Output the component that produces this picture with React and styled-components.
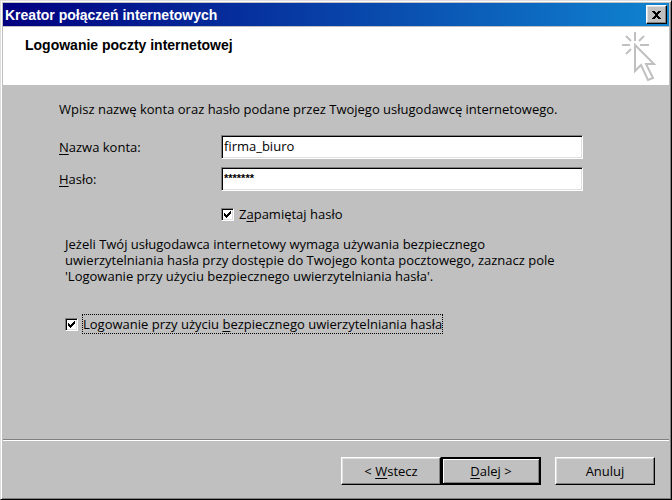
import React, { useState } from "react";
import styled, { createGlobalStyle, css } from "styled-components";

const GlobalStyle = createGlobalStyle`
    * {
        box-sizing: border-box;
    }
    body {
        margin: 0;
        background: #c0c0c0;
        color: #000;
        font-family: "Open Sans", "Liberation Sans", Arial, sans-serif;
        font-size: 13px;
        line-height: 16px;
    }
    button,
    input {
        font: inherit;
        color: inherit;
    }
    u {
        text-underline-offset: 2px;
    }
`;

const raised = css`
    border: 1px solid;
    border-color: #fff #000 #000 #fff;
    box-shadow: inset -1px -1px #808080, inset 1px 1px #dfdfdf;
`;

const sunken = css`
    border: 1px solid;
    border-color: #808080 #fff #fff #808080;
    box-shadow: inset 1px 1px #000, inset -1px -1px #dfdfdf;
`;

const Dialog = styled.div`
    display: flex;
    flex-direction: column;
    min-height: 100vh;
    padding: 2px;
    background: #c0c0c0;
    border: 1px solid;
    border-color: #dfdfdf #000 #000 #dfdfdf;
    box-shadow: inset 1px 1px #fff, inset -1px -1px #808080;
`;

const TitleBar = styled.header`
    display: flex;
    align-items: center;
    justify-content: space-between;
    height: 23px;
    padding: 0 2px;
    color: #fff;
    background: linear-gradient(to right, #000080, #1084d0);
`;

const Title = styled.h1`
    margin: 0;
    font-family: "Liberation Sans", Arial, sans-serif;
    font-size: 14px;
    font-weight: 700;
`;

const CloseButton = styled.button`
    ${raised}
    display: flex;
    align-items: center;
    justify-content: center;
    width: 21px;
    height: 19px;
    padding: 0;
    color: #000;
    background: #c0c0c0;
`;

const Banner = styled.div`
    display: flex;
    align-items: flex-start;
    justify-content: space-between;
    height: 58px;
    margin-top: 1px;
    padding: 4px 12px 0 22px;
    background: #fff;
`;

const Heading = styled.h2`
    margin: 6px 0 0;
    font-family: "Liberation Sans", Arial, sans-serif;
    font-size: 14px;
    font-weight: 700;
`;

const Content = styled.main`
    flex: 1;
    padding: 16px 86px 16px 56px;
`;

const Text = styled.p`
    margin: 0;
`;

const Fields = styled.div`
    display: grid;
    grid-template-columns: 162px 1fr;
    align-items: center;
    row-gap: 8px;
    margin-top: 18px;
`;

const TextInput = styled.input`
    ${sunken}
    width: 100%;
    height: 24px;
    padding: 0 2px 2px;
    background: #fff;
    border-radius: 0;
    outline: none;
`;

const PasswordInput = styled(TextInput)`
    font-family: "Liberation Sans", Arial, sans-serif;
    font-size: 11px;
    font-weight: 700;
`;

const Option = styled.label`
    display: flex;
    align-items: center;
    gap: 4px;
    width: fit-content;
`;

const Remember = styled(Option)`
    grid-column: 2;
    margin-top: 5px;
`;

const Secure = styled(Option)`
    margin-top: 30px;
`;

const Tick = styled.span`
    ${sunken}
    display: grid;
    width: 13px;
    height: 13px;
    background: #fff;

    input,
    svg {
        grid-area: 1 / 1;
        margin: 0;
        width: 11px;
        height: 11px;
    }
    input {
        appearance: none;
        outline: none;
    }
    svg {
        pointer-events: none;
        visibility: hidden;
    }
    input:checked + svg {
        visibility: visible;
    }
`;

const OptionText = styled.span`
    padding: 1px 0;
    border: 1px ${(props) => (props.$focused ? "dotted #000" : "solid transparent")};
`;

const Note = styled(Text)`
    margin-top: 12px;
    padding-left: 6px;
`;

const Indented = styled.div`
    padding-left: 6px;
`;

const Footer = styled.footer`
    display: flex;
    justify-content: flex-end;
    padding: 17px 14px 12px;
    border-top: 1px solid #808080;
    box-shadow: inset 0 1px #fff;
`;

const Button = styled.button`
    ${raised}
    width: 100px;
    height: 28px;
    padding: 0;
    background: #c0c0c0;

    ${(props) =>
        props.$default &&
        css`
            border: 2px solid #000;
            box-shadow: inset 1px 1px #fff, inset -1px -1px #808080;
        `}
`;

const CancelButton = styled(Button)`
    margin-left: 14px;
`;

const Check = () => (
    <svg viewBox="0 0 11 11" shapeRendering="crispEdges" aria-hidden="true">
        <path
            d="M2 4h1v3h-1zM3 5h1v3h-1zM4 6h1v3h-1zM5 5h1v3h-1zM6 4h1v3h-1zM7 3h1v3h-1zM8 2h1v3h-1z"
            fill="#000"
        />
    </svg>
);

const Cross = () => (
    <svg width="9" height="8" viewBox="0 0 9 8" shapeRendering="crispEdges" aria-hidden="true">
        <path
            d="M0 0h3v1h-3zM6 0h3v1h-3zM1 1h3v1h-3zM5 1h3v1h-3zM2 2h5v1h-5zM3 3h3v2h-3zM2 5h5v1h-5zM1 6h3v1h-3zM5 6h3v1h-3zM0 7h3v1h-3zM6 7h3v1h-3z"
            fill="#000"
        />
    </svg>
);

const ClickArrow = () => (
    <svg width="36" height="52" viewBox="0 0 36 52" fill="none" stroke="#c0c0c0" strokeWidth="2" aria-hidden="true">
        <path d="M14 1v9M1 14h8M19 14h9M5 5l5 5M23 5l-5 5M5 23l5-5" />
        <path d="M14 14v26l6-6 7 15 5-2-7-14h8z" />
    </svg>
);

const CheckOption = ({ as: Wrapper = Option, checked, onChange, focused, children }) => (
    <Wrapper>
        <Tick>
            <input type="checkbox" checked={checked} onChange={(e) => onChange(e.target.checked)} />
            <Check />
        </Tick>
        <OptionText $focused={focused}>{children}</OptionText>
    </Wrapper>
);

const App = () => {
    const [account, setAccount] = useState("firma_biuro");
    const [password, setPassword] = useState("*******");
    const [remember, setRemember] = useState(true);
    const [secure, setSecure] = useState(true);

    return (
        <>
            <GlobalStyle />
            <Dialog>
                <TitleBar>
                    <Title>Kreator połączeń internetowych</Title>
                    <CloseButton type="button" aria-label="Zamknij">
                        <Cross />
                    </CloseButton>
                </TitleBar>
                <Banner>
                    <Heading>Logowanie poczty internetowej</Heading>
                    <ClickArrow />
                </Banner>
                <Content>
                    <Text>Wpisz nazwę konta oraz hasło podane przez Twojego usługodawcę internetowego.</Text>
                    <Fields>
                        <label htmlFor="account">
                            <u>N</u>azwa konta:
                        </label>
                        <TextInput
                            id="account"
                            value={account}
                            onChange={(e) => setAccount(e.target.value)}
                        />
                        <label htmlFor="password">
                            <u>H</u>asło:
                        </label>
                        <PasswordInput
                            id="password"
                            value={password}
                            onChange={(e) => setPassword(e.target.value)}
                        />
                        <CheckOption as={Remember} checked={remember} onChange={setRemember}>
                            Z<u>a</u>pamiętaj hasło
                        </CheckOption>
                    </Fields>
                    <Note>
                        Jeżeli Twój usługodawca internetowy wymaga używania bezpiecznego
                        <br />
                        uwierzytelniania hasła przy dostępie do Twojego konta pocztowego, zaznacz pole
                        <br />
                        'Logowanie przy użyciu bezpiecznego uwierzytelniania hasła'.
                    </Note>
                    <Indented>
                        <CheckOption as={Secure} checked={secure} onChange={setSecure} focused>
                            Logowanie przy użyciu <u>b</u>ezpiecznego uwierzytelniania hasła
                        </CheckOption>
                    </Indented>
                </Content>
                <Footer>
                    <Button type="button">
                        &lt; <u>W</u>stecz
                    </Button>
                    <Button type="button" $default>
                        <u>D</u>alej &gt;
                    </Button>
                    <CancelButton type="button">Anuluj</CancelButton>
                </Footer>
            </Dialog>
        </>
    );
};

export default App;
